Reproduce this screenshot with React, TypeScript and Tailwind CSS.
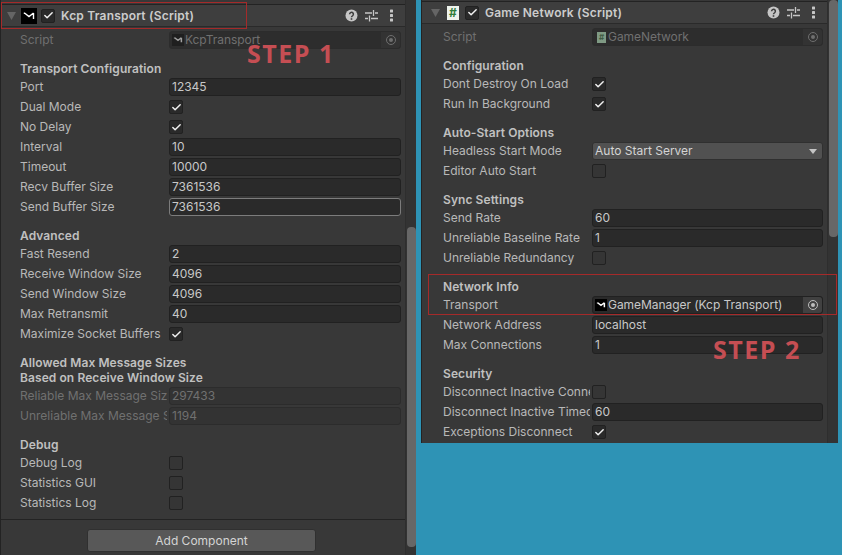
import React from 'react';
import { Check } from 'lucide-react';

const KcpIcon = ({ size = 18, dim }: { size?: number; dim?: boolean }) => (
  <span className={`flex shrink-0 items-center justify-center ${dim ? 'bg-[#1f1f1f]' : 'bg-black'}`} style={{ width: size, height: size }}>
    <svg viewBox="0 0 16 16" width={size} height={size} fill="none" stroke={dim ? '#a0a0a0' : '#fff'} strokeWidth={size < 14 ? 2 : 1.4}>
      <path d="M3.5 4.5v1.5M3.5 5l4.5 3.5 4.5-3.5M12.5 5v6" />
    </svg>
  </span>
);

const Checkbox = ({ checked }: { checked?: boolean }) => (
  <span className={`flex h-[14px] w-[14px] items-center justify-center rounded-[2px] border border-[#212121] ${checked ? 'bg-[#2a2a2a]' : 'bg-[#353535]'}`}>
    {checked && <Check size={11} strokeWidth={3.2} className="text-[#f0f0f0]" />}
  </span>
);

const Target = ({ bright }: { bright?: boolean }) => (
  <span className={`flex h-[16px] w-[19px] shrink-0 items-center justify-center rounded-r-[3px] ${bright ? 'bg-[#414141]' : 'bg-[#333333]'}`}>
    <span className={`flex h-[10px] w-[10px] items-center justify-center rounded-full border ${bright ? 'border-[#bdbdbd]' : 'border-[#6f6f6f]'}`}>
      <span className={`h-[4px] w-[4px] rounded-full ${bright ? 'bg-[#bdbdbd]' : 'bg-[#6f6f6f]'}`} />
    </span>
  </span>
);

const Row = ({ label, dim, children }: { label: string; dim?: boolean; children?: React.ReactNode }) => (
  <div className="flex h-5 items-center">
    <div className="w-[149px] shrink-0">
      <div className={`w-[147px] overflow-hidden whitespace-nowrap pb-[1px] ${dim ? 'text-[#707070]' : 'text-[#b8b8b8]'}`}>{label}</div>
    </div>
    <div className="flex min-w-0 flex-1 items-center">{children}</div>
  </div>
);

const Field = ({ value, focused, dim }: { value: string; focused?: boolean; dim?: boolean }) => (
  <div
    className={`flex h-[18px] flex-1 items-center rounded-[3px] border px-[2px] ${
      focused ? 'border-[#7c7c7c] bg-[#2a2a2a]' : dim ? 'border-[#2c2c2c] bg-[#333333]' : 'border-[#212121] bg-[#2a2a2a]'
    } ${dim ? 'text-[#707070]' : 'text-[#c8c8c8]'}`}
  >
    {value}
  </div>
);

const ObjectField = ({ icon, value, dim }: { icon: React.ReactNode; value: string; dim?: boolean }) => (
  <div className={`flex h-[18px] flex-1 items-center rounded-[3px] border pl-[2px] ${dim ? 'border-[#2c2c2c] bg-[#2d2d2d] text-[#707070]' : 'border-[#212121] bg-[#2a2a2a] text-[#c8c8c8]'}`}>
    {icon}
    <span className="ml-[1px] flex-1 whitespace-nowrap tracking-[-0.05px]">{value}</span>
    <Target bright={!dim} />
  </div>
);

const Heading = ({ children, className }: { children: React.ReactNode; className?: string }) => (
  <div className={`pb-[1px] font-semibold leading-[15px] tracking-[0.08px] text-[#c0c0c0] ${className ?? ''}`}>{children}</div>
);

const HelpIcon = () => (
  <svg viewBox="0 0 13 13" width="13" height="13" className="shrink-0">
    <circle cx="6.5" cy="6.5" r="6" fill="#c6c6c6" />
    <path d="M4.6 5.2a1.9 1.9 0 1 1 2.9 1.6c-.7.4-1 .7-1 1.4" fill="none" stroke="#3e3e3e" strokeWidth="1.5" />
    <rect x="5.7" y="9.2" width="1.6" height="1.6" fill="#3e3e3e" />
  </svg>
);

const PresetIcon = () => (
  <svg viewBox="0 0 13 13" width="13" height="13" fill="none" stroke="#c6c6c6" strokeWidth="1.3" className="ml-[7px] shrink-0">
    <path d="M0 4h7M10 4h3M8.5 1v6M0 9.5h3M6 9.5h7M4.5 6.5v6" />
  </svg>
);

const MenuIcon = () => (
  <svg viewBox="0 0 13 13" width="13" height="13" fill="#c6c6c6" className="ml-[7px] shrink-0">
    <rect x="5" y="0.5" width="3" height="3" rx="0.6" />
    <rect x="5" y="5" width="3" height="3" rx="0.6" />
    <rect x="5" y="9.5" width="3" height="3" rx="0.6" />
  </svg>
);

const Header = ({ icon, title, className }: { icon: React.ReactNode; title: string; className: string }) => (
  <div className={`flex h-[22px] items-center border-b border-[#2a2a2a] bg-[#3e3e3e] pr-[7px] ${className}`}>
    <svg viewBox="0 0 8 7" width="9" height="8" className="shrink-0">
      <path d="M0 0h8L4 7z" fill="#656565" />
    </svg>
    <span className="ml-[5px] flex w-4 justify-center">{icon}</span>
    <span className="ml-[4px] flex h-[14px] w-[14px] items-center justify-center rounded-[2px] border border-[#212121] bg-[#2a2a2a]">
      <Check size={11} strokeWidth={3.2} className="text-[#f0f0f0]" />
    </span>
    <span className="ml-[6px] flex-1 font-semibold tracking-[0.2px] text-[#cccccc]">{title}</span>
    <HelpIcon />
    <PresetIcon />
    <MenuIcon />
  </div>
);

const Scrollbar = ({ top, height }: { top: number; height: number }) => (
  <div className="absolute bottom-0 right-0 top-0 w-[11px] border-l border-[#2e2e2e] bg-[#333333]">
    <div className="absolute left-[1px] right-0 rounded-[4px] bg-[#676767]" style={{ top, height }} />
  </div>
);

const StepLabel = ({ text, className }: { text: string; className: string }) => (
  <div className={`absolute whitespace-nowrap font-['Open_Sans',sans-serif] text-[25px] font-bold leading-none tracking-[1.5px] text-[#c54e53] ${className}`}>{text}</div>
);

export default function App() {
  return (
    <div className="flex h-[555px] w-[842px] overflow-hidden bg-[#2e93b5] font-['Inter','Noto_Sans',sans-serif] text-[12px]">
      {/* Kcp transport inspector */}
      <div className="relative h-full w-[416px] shrink-0 border-l border-[#232323] bg-[#383838] pr-[11px]">
        <div className="h-[5px] border-b border-[#232323]" />
        <Header icon={<KcpIcon size={16} />} title="Kcp Transport (Script)" className="pl-[6px]" />
        <div className="pl-[19px] pr-[4px] pt-[3px]">
          <Row label="Script" dim>
            <ObjectField dim icon={<KcpIcon size={12} dim />} value="KcpTransport" />
          </Row>
          <Heading className="mt-[11px]">Transport Configuration</Heading>
          <Row label="Port"><Field value="12345" /></Row>
          <Row label="Dual Mode"><Checkbox checked /></Row>
          <Row label="No Delay"><Checkbox checked /></Row>
          <Row label="Interval"><Field value="10" /></Row>
          <Row label="Timeout"><Field value="10000" /></Row>
          <Row label="Recv Buffer Size"><Field value="7361536" /></Row>
          <Row label="Send Buffer Size"><Field value="7361536" focused /></Row>
          <Heading className="mt-[11px]">Advanced</Heading>
          <Row label="Fast Resend"><Field value="2" /></Row>
          <Row label="Receive Window Size"><Field value="4096" /></Row>
          <Row label="Send Window Size"><Field value="4096" /></Row>
          <Row label="Max Retransmit"><Field value="40" /></Row>
          <Row label="Maximize Socket Buffers"><Checkbox checked /></Row>
          <Heading className="mt-[11px]">Allowed Max Message Sizes<br />Based on Receive Window Size</Heading>
          <Row label="Reliable Max Message Size" dim><Field value="297433" dim /></Row>
          <Row label="Unreliable Max Message Size" dim><Field value="1194" dim /></Row>
          <Heading className="mt-[11px]">Debug</Heading>
          <Row label="Debug Log"><Checkbox /></Row>
          <Row label="Statistics GUI"><Checkbox /></Row>
          <Row label="Statistics Log"><Checkbox /></Row>
        </div>
        <div className="mt-[6px] flex justify-center border-t border-[#232323] pt-[9px]">
          <button className="ml-[-3px] h-[23px] w-[229px] rounded-[3px] border border-[#303030] bg-[#585858] text-[#d4d4d4]">Add Component</button>
        </div>
        <StepLabel text="STEP 1" className="left-[246px] top-[41px]" />
        <div className="absolute left-0 top-[2px] h-[27px] w-[246px] border border-[#a52a2a]" />
        <Scrollbar top={227} height={320} />
      </div>

      {/* Game network inspector */}
      <div className="ml-[5px] w-[417px] shrink-0">
        <div className="relative h-[443px] overflow-hidden border-l border-[#232323] bg-[#383838] pr-[11px]">
          <div className="h-[2px] border-b border-[#232323]" />
          <Header
            icon={
              <span className="flex h-[14px] w-[12px] items-center justify-center bg-[#eef3ec] font-bold leading-none text-[#2f7d3a]">#</span>
            }
            title="Game Network (Script)"
            className="pl-[9px]"
          />
          <div className="pl-[21px] pr-[4px] pt-[3px]">
            <Row label="Script" dim>
              <ObjectField
                dim
                icon={
                  <span className="ml-[2px] mr-[1px] flex h-[11px] w-[9px] items-center justify-center bg-[#7f9a84] text-[8px] font-bold leading-none text-[#3f5a44]">#</span>
                }
                value="GameNetwork"
              />
            </Row>
            <Heading className="mt-[11px]">Configuration</Heading>
            <Row label="Dont Destroy On Load"><Checkbox checked /></Row>
            <Row label="Run In Background"><Checkbox checked /></Row>
            <Heading className="mt-[11px]">Auto-Start Options</Heading>
            <Row label="Headless Start Mode">
              <div className="flex h-[18px] flex-1 items-center justify-between rounded-[3px] border border-[#303030] bg-[#515151] pl-[2px] pr-[5px] text-[#d4d4d4]">
                Auto Start Server
                <svg viewBox="0 0 8 5" width="8" height="5"><path d="M0 0h8L4 5z" fill="#c4c4c4" /></svg>
              </div>
            </Row>
            <Row label="Editor Auto Start"><Checkbox /></Row>
            <Heading className="mt-[11px]">Sync Settings</Heading>
            <Row label="Send Rate"><Field value="60" /></Row>
            <Row label="Unreliable Baseline Rate"><Field value="1" /></Row>
            <Row label="Unreliable Redundancy"><Checkbox /></Row>
            <Heading className="mt-[11px]">Network Info</Heading>
            <Row label="Transport">
              <ObjectField icon={<KcpIcon size={12} />} value="GameManager (Kcp Transport)" />
            </Row>
            <Row label="Network Address"><Field value="localhost" /></Row>
            <Row label="Max Connections"><Field value="1" /></Row>
            <Heading className="mt-[11px]">Security</Heading>
            <Row label="Disconnect Inactive Connections"><Checkbox /></Row>
            <Row label="Disconnect Inactive Timeout"><Field value="60" /></Row>
            <Row label="Exceptions Disconnect"><Checkbox checked /></Row>
          </div>
          <Scrollbar top={0} height={237} />
          <StepLabel text="STEP 2" className="left-[291px] top-[337px]" />
          <div className="absolute left-[6px] top-[274px] h-[41px] w-[409px] border border-[#a52a2a]" />
        </div>
      </div>
    </div>
  );
}
